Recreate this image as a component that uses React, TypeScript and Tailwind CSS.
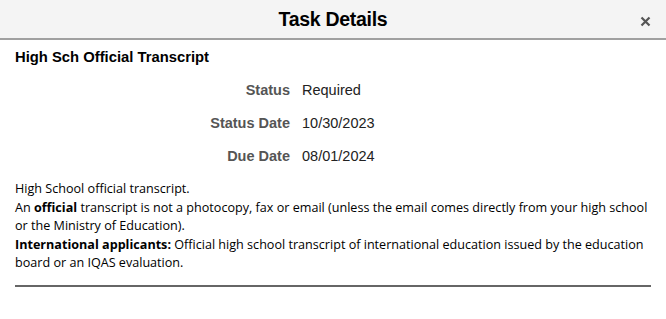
import React from "react";

export default function App() {
  return (
    <div className="w-[666px] h-[319px] bg-white overflow-hidden" style={{ fontFamily: '"Liberation Sans", Arial, sans-serif' }}>
      <div className="relative h-[40px] bg-[#f4f4f4] border-b-2 border-[#a0a0a0] flex items-center justify-center">
        <h1 className="text-[19.5px] font-bold text-black tracking-[-0.3px] pt-[1px]">Task Details</h1>
        <button className="absolute right-[15px] top-[15px] w-[12px] h-[12px] flex items-center justify-center">
          <svg width="11" height="11" viewBox="0 0 11 11">
            <path d="M1.5 1.5 L9.5 9.5 M9.5 1.5 L1.5 9.5" stroke="#555" strokeWidth="2.2" />
          </svg>
        </button>
      </div>
      <div className="px-[15px]">
        <div className="pt-[8px] text-[14.8px] font-bold text-black leading-[18px]">High Sch Official Transcript</div>
        <div className="mt-[15px] flex flex-col gap-[15px] text-[14.5px] leading-[18px]">
          {[
            ["Status", "Required"],
            ["Status Date", "10/30/2023"],
            ["Due Date", "08/01/2024"],
          ].map(([k, v]) => (
            <div key={k} className="flex">
              <div className="w-[275px] text-right font-bold text-[#555]">{k}</div>
              <div className="ml-[12px] text-[#222]">{v}</div>
            </div>
          ))}
        </div>
        <div className="mt-[15px] text-[12.6px] leading-[18.5px] text-black tracking-[0px]" style={{ fontFamily: '"Open Sans", "Liberation Sans", sans-serif' }}>
          <div>High School official transcript.</div>
          <div>
            An <b>official</b> transcript is not a photocopy, fax or email (unless the email comes directly from your high school or the Ministry of Education).
          </div>
          <div>
            <b>International applicants:</b> Official high school transcript of international education issued by the education board or an IQAS evaluation.
          </div>
        </div>
        <div className="mt-[12px] h-[2px] bg-[#666]"></div>
      </div>
    </div>
  );
}
